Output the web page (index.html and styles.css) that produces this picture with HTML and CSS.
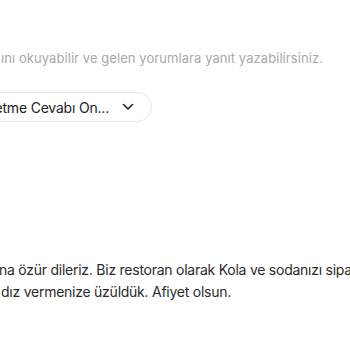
FILE: index.html
```html
<!DOCTYPE html>
<html lang="tr">
<head>
    <meta charset="UTF-8">
    <title>Yorumlar</title>
    <link rel="stylesheet" href="styles.css">
</head>
<body>
    <div class="page">
        <p class="hint">ını okuyabilir ve gelen yorumlara yanıt yazabilirsiniz.</p>

        <div class="pill">
            <span class="pill-text">etme Cevabı On...</span>
            <svg class="chev" width="12" height="8" viewBox="0 0 12 8">
                <path d="M1.5 1.5 L6 6 L10.5 1.5" fill="none" stroke="#222" stroke-width="1.6" stroke-linecap="round" stroke-linejoin="round"/>
            </svg>
        </div>

        <div class="reply">
            <div class="line l1">na özür dileriz. Biz restoran olarak Kola ve sodanızı siparişinize</div>
            <div class="line l2">dız vermenize üzüldük. Afiyet olsun.</div>
        </div>
    </div>
</body>
</html>
```

FILE: styles.css
```css
body{
    margin: 0;
    background: #fff;
    overflow: hidden;
    font-family: Inter, "Noto Sans", sans-serif;
}

.page{
    padding-top: 48px;
}

.hint{
    margin: 0 0 0 1px;
    font-size: 13px;
    line-height: 20px;
    color: #a9a9a9;
    letter-spacing: 0.07px;
    white-space: nowrap;
}

.pill{
    margin-top: 24px;
    margin-left: -60px;
    width: 212px;
    height: 30px;
    box-sizing: border-box;
    border: 1px solid #e3e3e3;
    border-radius: 16px;
    display: flex;
    align-items: center;
    justify-content: flex-end;
    padding-right: 17px;
}

.pill-text{
    font-size: 14px;
    color: #222;
    letter-spacing: -0.2px;
    white-space: nowrap;
    margin-right: 13px;
}

.reply{
    margin-top: 137px;
    font-size: 14px;
    line-height: 22px;
    color: #2b2b2b;
    letter-spacing: -0.25px;
    white-space: nowrap;
}

.l1{ margin-left: -1px; }
.l2{ margin-left: 1px; }
```
